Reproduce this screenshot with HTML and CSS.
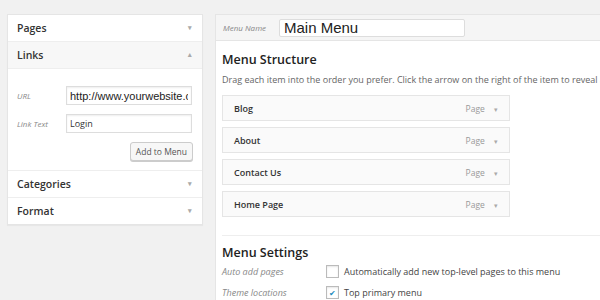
FILE: index.html
```html
<!DOCTYPE html>
<html lang="en">
<head>
    <meta charset="UTF-8">
    <title>Menus</title>
    <link rel="stylesheet" href="styles.css">
</head>
<body>

<!-- left column: add items -->
<div class="side">
    <div class="sec-head">Pages <span class="arrow">&#9662;</span></div>
    <div class="sec-head open">Links <span class="arrow">&#9652;</span></div>
    <div class="sec-body">
        <div class="field">
            <label>URL</label>
            <input type="text" class="big" value="http://www.yourwebsite.com">
        </div>
        <div class="field">
            <label>Link Text</label>
            <input type="text" value="Login">
        </div>
        <div class="btn-row"><button>Add to Menu</button></div>
    </div>
    <div class="sec-head">Categories <span class="arrow">&#9662;</span></div>
    <div class="sec-head">Format <span class="arrow">&#9662;</span></div>
</div>

<!-- right column: menu editor -->
<div class="main">
    <div class="name-bar">
        <label>Menu Name</label>
        <input type="text" class="name-input" value="Main Menu">
    </div>
    <div class="main-body">
        <h3>Menu Structure</h3>
        <p class="hint">Drag each item into the order you prefer. Click the arrow on the right of the item to reveal additional configuration options.</p>
        <div class="items">
            <div class="item"><span>Blog</span><span class="type">Page <span class="arrow">&#9662;</span></span></div>
            <div class="item"><span>About</span><span class="type">Page <span class="arrow">&#9662;</span></span></div>
            <div class="item"><span>Contact Us</span><span class="type">Page <span class="arrow">&#9662;</span></span></div>
            <div class="item"><span>Home Page</span><span class="type">Page <span class="arrow">&#9662;</span></span></div>
        </div>
        <div class="settings">
            <h3>Menu Settings</h3>
            <div class="set-row">
                <span class="set-label">Auto add pages</span>
                <span class="check"></span>
                <span>Automatically add new top-level pages to this menu</span>
            </div>
            <div class="set-row">
                <span class="set-label">Theme locations</span>
                <span class="check on">&#10004;</span>
                <span>Top primary menu</span>
            </div>
        </div>
    </div>
</div>

</body>
</html>
```

FILE: styles.css
```css
body {
    margin: 0;
    padding: 14px 0 0 7px;
    background-color: #f1f1f1;
    font-family: "Open Sans", Arial, sans-serif;
    color: #444;
    display: flex;
    align-items: flex-start;
    gap: 12px;
    height: 300px;
    box-sizing: border-box;
    overflow: hidden;
}
.side {
    width: 194px;
    background-color: white;
    border: 1px solid #e5e5e5;
    box-shadow: 0 1px 1px rgba(0, 0, 0, 0.04);
}
.sec-head {
    display: flex;
    justify-content: space-between;
    align-items: center;
    height: 25px;
    padding: 0 10px 1px 9px;
    font-size: 10.5px;
    font-weight: 600;
    color: #333;
    border-top: 1px solid #eee;
}
.sec-head:first-child {
    border-top: none;
}
.sec-head.open {
    background-color: #f7f7f7;
    border-bottom: 1px solid #eee;
}
.arrow {
    font-size: 7px;
    color: #aaa;
}
.sec-body {
    padding: 17px 9px 9px 9px;
}
.field {
    display: flex;
    align-items: center;
    margin-bottom: 9px;
}
.field label {
    width: 49px;
    font-size: 8px;
    font-style: italic;
    color: #888;
}
.field input {
    width: 126px;
    height: 19px;
    box-sizing: border-box;
    border: 1px solid #ddd;
    padding: 0 3px;
    font-family: "Open Sans", Arial, sans-serif;
    font-size: 9px;
    color: #333;
    box-shadow: inset 0 1px 2px rgba(0, 0, 0, 0.07);
}
.field input.big {
    font-family: "Liberation Sans", Arial, sans-serif;
    font-size: 11px;
    color: #222;
}
.btn-row {
    display: flex;
    justify-content: flex-end;
}
.btn-row button {
    height: 19px;
    padding: 0 5px;
    border: 1px solid #ccc;
    border-radius: 3px;
    background-color: #f7f7f7;
    box-shadow: 0 1px 0 #ccc;
    font-family: "Open Sans", Arial, sans-serif;
    font-size: 8.5px;
    color: #555;
}
.main {
    flex: 1;
    min-width: 0;
    background-color: white;
    border: 1px solid #e5e5e5;
    border-right: none;
    border-bottom: none;
    height: 286px;
    overflow: hidden;
}
.name-bar {
    display: flex;
    align-items: center;
    height: 25px;
    padding: 0 7px;
    background-color: #f5f5f5;
    border-bottom: 1px solid #e5e5e5;
}
.name-bar label {
    width: 56px;
    font-size: 8px;
    font-style: italic;
    color: #888;
}
.name-input {
    width: 186px;
    height: 18px;
    box-sizing: border-box;
    border: 1px solid #ddd;
    border-radius: 2px;
    padding: 0 4px;
    font-family: "Liberation Sans", Arial, sans-serif;
    font-size: 15px;
    color: #222;
}
.main-body {
    padding: 0 0 0 6px;
}
h3 {
    margin: 0;
    font-size: 12.5px;
    font-weight: 600;
    color: #222;
}
.main-body > h3 {
    padding-top: 10px;
}
.hint {
    margin: 5px 0 0 0;
    font-size: 9px;
    color: #666;
    white-space: nowrap;
}
.items {
    display: flex;
    flex-direction: column;
    gap: 6px;
    margin-top: 9px;
    padding-bottom: 18px;
    border-bottom: 1px solid #eee;
}
.item {
    width: 288px;
    height: 26px;
    box-sizing: border-box;
    display: flex;
    justify-content: space-between;
    align-items: center;
    padding: 0 11px;
    border: 1px solid #e5e5e5;
    background-color: #fafafa;
    font-size: 9px;
    font-weight: 600;
    color: #333;
}
.item .type {
    font-weight: normal;
    color: #999;
    font-size: 8.5px;
}
.item .type .arrow {
    margin-left: 7px;
}
.settings h3 {
    padding-top: 8px;
}
.set-row {
    display: flex;
    align-items: center;
    height: 21px;
    font-size: 9px;
    color: #444;
}
.set-label {
    width: 104px;
    font-style: italic;
    color: #888;
}
.check {
    width: 11px;
    height: 11px;
    border: 1px solid #bbb;
    box-shadow: inset 0 1px 2px rgba(0, 0, 0, 0.1);
    margin-right: 5px;
    display: flex;
    align-items: center;
    justify-content: center;
    font-size: 8px;
    color: #1e8cbe;
}
```
